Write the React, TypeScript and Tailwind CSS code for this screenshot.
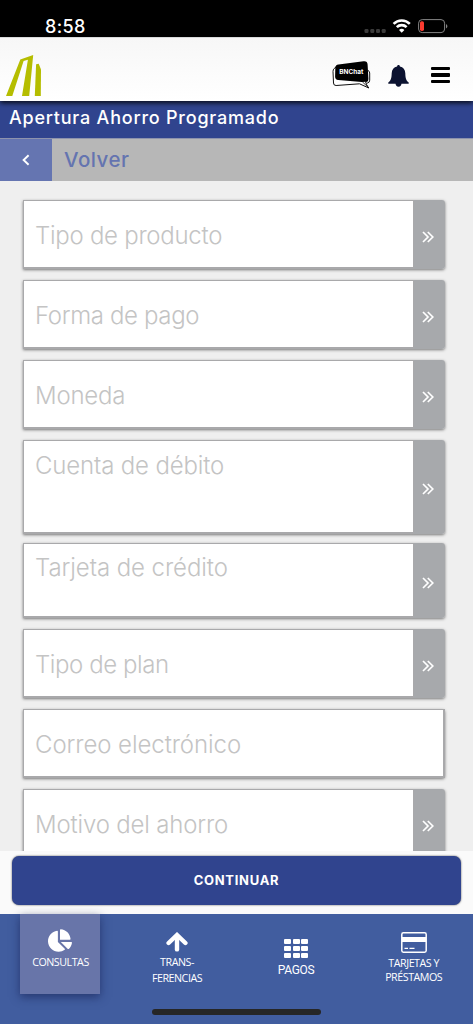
import { FaChartPie } from 'react-icons/fa'
import { clsx } from 'clsx'

type Field = {
  label: string
  height: string
  gap: string
  pad: string
  select?: boolean
  tracking: string
}

const fields: Field[] = [
  { label: 'Tipo de producto', height: 'h-[69px]', gap: 'mb-[11px]', pad: 'pt-[19px]', select: true, tracking: 'tracking-[-0.27px]' },
  { label: 'Forma de pago', height: 'h-[69px]', gap: 'mb-[11px]', pad: 'pt-[19px]', select: true, tracking: 'tracking-[-0.36px]' },
  { label: 'Moneda', height: 'h-[69px]', gap: 'mb-[11px]', pad: 'pt-[19px]', select: true, tracking: 'tracking-[-0.2px]' },
  { label: 'Cuenta de débito', height: 'h-[94px]', gap: 'mb-[9px]', pad: 'pt-[9px]', select: true, tracking: 'tracking-[-0.16px]' },
  { label: 'Tarjeta de crédito', height: 'h-[75px]', gap: 'mb-[11px]', pad: 'pt-[8px]', select: true, tracking: 'tracking-[-0.08px]' },
  { label: 'Tipo de plan', height: 'h-[69px]', gap: 'mb-[11px]', pad: 'pt-[19px]', select: true, tracking: 'tracking-[-0.43px]' },
  { label: 'Correo electrónico', height: 'h-[69px]', gap: 'mb-[11px]', pad: 'pt-[19px]', tracking: 'tracking-[-0.08px]' },
  { label: 'Motivo del ahorro', height: 'h-[69px]', gap: 'mb-[11px]', pad: 'pt-[19px]', select: true, tracking: 'tracking-[-0.17px]' },
]

function StatusBar() {
  return (
    <div className="flex h-[37px] shrink-0 items-start justify-between bg-black pl-[45px] pr-[25px] text-white">
      <span className="mt-[15px] font-['Inter'] text-[18px] font-medium leading-[23px] tracking-[0.4px]">8:58</span>
      <div className="mt-[17px] flex h-[18px]">
        <svg width="84" height="18" viewBox="0 0 84 18" fill="none">
          <g fill="#3b3b3b">
            <rect x="0.5" y="12" width="4" height="4" rx="1.2" />
            <rect x="6.3" y="12" width="4" height="4" rx="1.2" />
            <rect x="12" y="12" width="4" height="4" rx="1.2" />
            <rect x="17.7" y="12" width="4" height="4" rx="1.2" />
          </g>
          <g stroke="#fff" strokeWidth="2.6">
            <path d="M29.6 6.9a11.2 11.2 0 0 1 16.2 0" />
            <path d="M32.8 10.2a6.9 6.9 0 0 1 9.8 0" />
          </g>
          <path d="M37.7 15.8l-2.7-2.8a3.8 3.8 0 0 1 5.4 0z" fill="#fff" />
          <rect x="54.6" y="2.6" width="26" height="13" rx="3.6" stroke="#858585" />
          <path d="M82 7v4.4c1.900-.8 1.900-3.600 0-4.400z" fill="#858585" />
          <rect x="56" y="4.3" width="4" height="9.6" rx="1.6" fill="#fb3b30" />
        </svg>
      </div>
    </div>
  )
}

function Logo() {
  return (
    <svg width="36" height="42" viewBox="0 0 36 42" fill="#b5bd00" className="ml-[6px] mt-[16px]">
      <path d="M0 42L14.300 5.500 27.200 1 23.200 42H16l5.900-36.200-4.300 1.100L6.300 42z" />
      <path d="M28.800 42L30.100 10.300l2.600-.6 2.300 5.800L34.800 42z" />
    </svg>
  )
}

function ChatIcon() {
  return (
    <svg width="39" height="30" viewBox="0 0 39 30" className="mt-[22px]">
      <path
        d="M4.500 6.500L2.200 8.500Q1 9.600 1 11.500L1.500 23q.1 2.600 2.600 2.500L27.500 23.800l9.300 4.200-3.300-4.700 2-.3q2.200-.4 2.200-2.800V13q0-1.800-1.900-2.700"
        fill="#fff"
        stroke="#111"
        strokeWidth="1"
      />
      <path d="M6.500 4.600L31.500 1.200q4-.5 4.100 3.300l.8 14.200q.1 3.600-3.600 3.600L6.200 19.900q-3-.3-3.100-3.200L3.300 8q.1-3 3.200-3.400z" />
      <path d="M30.500 22l5 4.600-2.200-4.800" fill="#fff" stroke="#111" strokeWidth=".8" />
      <text
        x="7.300"
        y="14.400"
        fill="#fff"
        fontFamily="Inter"
        fontSize="6.400"
        fontWeight="700"
        textLength="24"
        lengthAdjust="spacingAndGlyphs"
      >
        BNChat
      </text>
    </svg>
  )
}

function BellIcon() {
  return (
    <svg width="21" height="22" viewBox="0 0 21 22" fill="#0b1230" className="ml-[17px] mt-[27px]">
      <path d="M10.500 0c.9 0 1.400.6 1.400 1.500 3.300.6 5.300 3 5.400 6.700.1 4.800.8 7.500 3.400 9.300v1.200H.3v-1.200c2.600-1.800 3.300-4.500 3.400-9.300.1-3.700 2.100-6.100 5.400-6.700C9.100.6 9.600 0 10.500 0z" />
      <path d="M7.500 18h6c0 2.300-1.200 3.700-3 3.700s-3-1.400-3-3.700z" />
    </svg>
  )
}

function Header() {
  return (
    <header className="relative z-10 flex h-[64px] shrink-0 items-start justify-between border-t border-[#d8dadb] bg-gradient-to-b from-[#f7f7f7] to-white pr-[23px] shadow-[0_2px_5px_rgb(0_0_0/0.85)]">
      <Logo />
      <div className="flex items-start">
        <ChatIcon />
        <BellIcon />
        <div className="ml-[22px] mt-[29px] flex w-[19px] flex-col gap-[3px]">
          <span className="h-[3.4px] rounded-[1px] bg-black" />
          <span className="h-[3.4px] rounded-[1px] bg-black" />
          <span className="h-[3.4px] rounded-[1px] bg-black" />
        </div>
      </div>
    </header>
  )
}

function FieldRow({ label, height, gap, pad, select, tracking }: Field) {
  return (
    <div className={clsx('flex shrink-0 rounded-r-[3px] shadow-[0_1px_3px_rgb(0_0_0/0.5)]', height, gap)}>
      <div
        className={clsx(
          'flex flex-1 items-start border border-b-2 border-[#a9a9ab] bg-white pl-[11px]',
          !select && 'border-r-2',
          pad,
        )}
      >
        <span className={clsx("whitespace-nowrap font-['Inter'] text-[24px] font-light leading-[32px] text-[#c4c4c4]", tracking)}>
          {label}
        </span>
      </div>
      {select && (
        <div className="flex w-[31px] items-center justify-center rounded-r-[3px] bg-[#a7a9ac]">
          <svg width="12" height="12" viewBox="0 0 12 12" fill="none" stroke="#fff" strokeWidth="1.7" className="mt-[4px] mr-[4px]">
            <path d="M1 1l5 5-5 5M5.800 1l5 5-5 5" />
          </svg>
        </div>
      )}
    </div>
  )
}

function BottomNav() {
  return (
    <nav className="relative flex h-[110px] shrink-0 items-start bg-[#415d9f] text-center font-['Open_Sans'] text-[11.5px] text-white">
      <div className="ml-[20px] flex h-[80px] w-[80px] flex-col items-center bg-[#6875a9] shadow-[0_3px_9px_rgb(20_30_80/0.6)]">
        <FaChartPie className="mt-[15px] h-[23px] w-[24px]" />
        <span className="mt-[2px] scale-x-[0.93] leading-[16px] tracking-[-0.5px]">CONSULTAS</span>
      </div>
      <div className="ml-[37px] flex w-[80px] flex-col items-center">
        <svg
          width="22"
          height="20"
          viewBox="0 0 22 20"
          fill="none"
          stroke="#fff"
          strokeWidth="4.4"
          strokeLinecap="round"
          className="mt-[18px] mb-[2px]"
        >
          <path d="M2.600 11L11 3l8.400 8" strokeLinejoin="miter" />
          <path d="M11 5v12.400" />
        </svg>
        <span className="scale-x-[0.93] leading-[16px] tracking-[-0.5px]">
          TRANS-
          <br />
          FERENCIAS
        </span>
      </div>
      <div className="ml-[39px] flex w-[80px] flex-col items-center">
        <div className="mt-[24.5px] grid w-[24px] grid-cols-3 gap-x-[1.5px] gap-y-[2px]">
          {Array.from({ length: 9 }, (_, i) => (
            <span key={i} className="h-[5.2px] rounded-[1px] bg-white" />
          ))}
        </div>
        <span className="mt-[4px] font-['Roboto'] text-[12px] leading-[16px] tracking-[-0.3px]">PAGOS</span>
      </div>
      <div className="ml-[38px] flex w-[80px] flex-col items-center">
        <svg width="26" height="21" viewBox="0 0 26 21" fill="none" className="mt-[18px]">
          <rect x=".8" y=".8" width="24.400" height="19.400" rx="1.600" stroke="#fff" strokeWidth="1.500" />
          <path d="M1 5h24v5H1z" fill="#fff" />
          <path d="M3.500 16.300h3.500M8.500 16.300h5" stroke="#fff" strokeWidth="1.200" />
        </svg>
        <span className="mt-[3px] scale-x-[0.93] leading-[14px] tracking-[-0.5px]">
          TARJETAS Y
          <br />
          PRÉSTAMOS
        </span>
      </div>
      <div className="absolute bottom-[9px] left-[152px] h-[6px] w-[169px] rounded-full bg-[#262626]" />
    </nav>
  )
}

export default function App() {
  return (
    <div className="flex h-[1024px] w-[473px] flex-col overflow-hidden bg-[#efefef] font-['Inter',sans-serif]">
      <StatusBar />
      <Header />
      <h1 className="flex h-[37px] shrink-0 items-center bg-[#30448e] pb-[5px] pl-[9px] text-[18px] font-medium text-white">
        <span className="whitespace-nowrap tracking-[0.78px]">Apertura Ahorro Programado</span>
      </h1>
      <div className="flex h-[43px] shrink-0 border-t border-[#8d93ad] bg-[#b7b7b7]">
        <button type="button" className="flex w-[52px] items-center justify-center bg-[#6575b1]">
          <svg width="8" height="12" viewBox="0 0 8 12" fill="none" stroke="#fff" strokeWidth="1.900">
            <path d="M6.600 1.200L1.600 6l5 4.800" />
          </svg>
        </button>
        <span className="ml-[12px] self-center text-[20.5px] font-medium tracking-[0.5px] text-[#6474b0]">Volver</span>
      </div>
      <main className="flex min-h-0 flex-1 flex-col overflow-hidden pl-[23px] pr-[28px] pt-[19px]">
        {fields.map((field) => (
          <FieldRow key={field.label} {...field} />
        ))}
      </main>
      <div className="h-[63px] shrink-0 bg-[#fafafa] px-[12px] pt-[5px]">
        <button
          type="button"
          className="h-[49px] w-full rounded-[7px] bg-[#30448e] text-[13px] font-bold tracking-[0.7px] text-white shadow-[0_0_2px_rgb(0_0_0/0.7)]"
        >
          CONTINUAR
        </button>
      </div>
      <BottomNav />
    </div>
  )
}
